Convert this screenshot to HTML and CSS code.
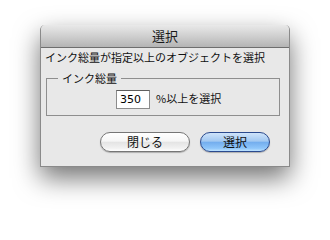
FILE: index.html
```html
<!DOCTYPE html>
<html lang="ja">
<head>
<meta charset="utf-8">
<title>選択</title>
<link rel="stylesheet" href="styles.css">
</head>
<body>
<div class="window">
  <div class="titlebar">選択</div>
  <div class="content">
    <div class="message">インク総量が指定以上のオブジェクトを選択</div>
    <fieldset class="group">
      <legend class="group-label">インク総量</legend>
      <div class="row">
        <input class="amount" type="text" value="350">
        <span class="unit">%以上を選択</span>
      </div>
    </fieldset>
    <div class="buttons">
      <button class="btn btn-close">閉じる</button>
      <button class="btn btn-default">選択</button>
    </div>
  </div>
</div>
</body>
</html>
```
FILE: styles.css
```css
html, body {
  margin: 0;
  padding: 0;
  background: #ffffff;
}
body {
  width: 330px;
  height: 222px;
  overflow: hidden;
  font-family: "Noto Sans CJK JP", "Noto Sans", sans-serif;
  color: #111;
}
.window {
  margin: 25px 0 0 40px;
  width: 250px;
  height: 142px;
  box-sizing: border-box;
  border: 1px solid #8a8a8a;
  border-top: none;
  border-radius: 5px 5px 0 0;
  background: #e8e8e8;
  box-shadow: 0 11px 26px rgba(0, 0, 0, 0.55);
  display: flex;
  flex-direction: column;
  overflow: hidden;
}
.titlebar {
  height: 22px;
  line-height: 22px;
  flex: none;
  text-align: center;
  font-size: 13px;
  color: #1a1a1a;
  background: linear-gradient(to bottom, #e9e9e9 0%, #d2d2d2 45%, #b4b4b4 100%);
  border-bottom: 1px solid #6e6e6e;
}
.content {
  flex: 1;
  display: flex;
  flex-direction: column;
}
.message {
  margin: 2px 0 0 4px;
  font-size: 11px;
  line-height: 14px;
}
.group {
  margin: 7px 0 0 5px;
  padding: 0;
  width: 234px;
  height: 45px;
  box-sizing: border-box;
  border: 1px solid #8e8e8e;
  min-width: 0;
}
.group-label {
  margin-left: 11px;
  padding: 0 4px;
  font-size: 11px;
  line-height: 14px;
}
.row {
  display: flex;
  align-items: center;
  padding: 5px 0 0 69px;
}
.amount {
  width: 34px;
  height: 19px;
  box-sizing: border-box;
  margin: 0;
  padding: 0 0 0 3px;
  border: 1px solid #8c8c8c;
  border-top-color: #5e5e5e;
  background: #ffffff;
  font-family: "DejaVu Sans", sans-serif;
  font-size: 11px;
  color: #000;
  outline: none;
}
.unit {
  margin: 0 0 3px 6px;
  font-size: 11px;
  line-height: 14px;
}
.buttons {
  display: flex;
  justify-content: flex-end;
  gap: 10px;
  margin-top: 16px;
  padding-right: 19px;
}
.btn {
  height: 20px;
  box-sizing: border-box;
  margin: 0;
  padding: 0;
  border-radius: 10px;
  font-family: "Noto Sans CJK JP", sans-serif;
  font-size: 12px;
  line-height: 18px;
  color: #111;
  box-shadow: 0 1px 1px rgba(0, 0, 0, 0.25);
}
.btn-close {
  width: 90px;
  border: 1px solid #767676;
  background: linear-gradient(to bottom, #ffffff 0%, #f6f6f6 45%, #e4e4e4 52%, #f2f2f2 85%, #ffffff 100%);
}
.btn-default {
  width: 70px;
  border: 1px solid #2b4a8e;
  background: linear-gradient(to bottom, #cfe4fa 0%, #a2c8f1 45%, #74aeee 52%, #8fc6fa 85%, #bfe3ff 100%);
}
```
